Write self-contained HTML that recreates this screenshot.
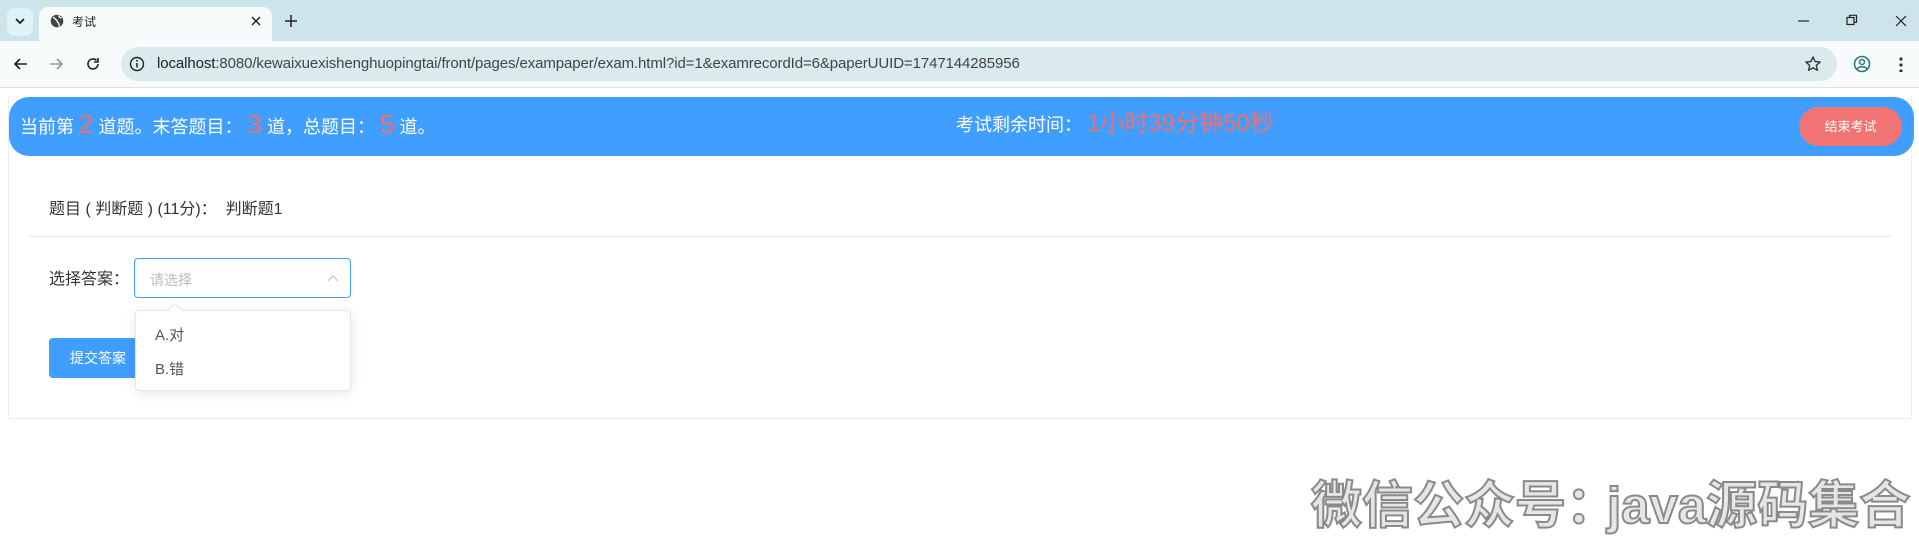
<!DOCTYPE html>
<html><head><meta charset="utf-8"><style>
*{margin:0;padding:0;box-sizing:border-box}
body{width:1919px;height:531px;overflow:hidden;background:#fff;font-family:"Liberation Sans","Noto Sans CJK SC",sans-serif;position:relative}
.abs{position:absolute}
</style></head><body>
<!-- tab strip -->
<div class="abs" style="left:0;top:0;width:1919px;height:41px;background:#cde5ea"></div>
<div class="abs" style="left:7px;top:8px;width:26px;height:28px;border-radius:8px;background:#dff4f8"></div>
<svg class="abs" style="left:13px;top:15px" width="14" height="12"><path d="M3 4l4 4 4-4" stroke="#222" stroke-width="1.8" fill="none"/></svg>
<div class="abs" style="left:39px;top:7px;width:233px;height:36px;background:#f7fbfc;border-radius:9px 9px 0 0"></div>
<svg class="abs" style="left:50px;top:14px" width="14" height="14" viewBox="0 0 14 14"><circle cx="7" cy="7" r="6.3" fill="#444"/><path d="M3 3.5c2 0 2 2 3.5 2.5s0 2 1.5 2.5 1 3 1 4M9 1.5c-.5 1.5 1 2 2.5 2.5" stroke="#fff" stroke-width="1.3" fill="none"/></svg>
<div class="abs" style="left:72px;top:13px;font-size:12px;color:#222">考试</div>
<svg class="abs" style="left:250px;top:15px" width="12" height="12"><path d="M2 2l8 8M10 2l-8 8" stroke="#222" stroke-width="1.5"/></svg>
<svg class="abs" style="left:284px;top:14px" width="14" height="14"><path d="M7 1v12M1 7h12" stroke="#222" stroke-width="1.5"/></svg>
<svg class="abs" style="left:1798px;top:15px" width="12" height="12"><path d="M0 6h11" stroke="#222" stroke-width="1.2"/></svg>
<svg class="abs" style="left:1846px;top:14px" width="12" height="12"><rect x="1" y="3.5" width="7" height="7" fill="none" stroke="#222" stroke-width="1.2"/><path d="M3.5 3.5V1.3h7v7H8" fill="none" stroke="#222" stroke-width="1.2"/></svg>
<svg class="abs" style="left:1895px;top:15px" width="12" height="12"><path d="M1 1l10 10M11 1L1 11" stroke="#222" stroke-width="1.2"/></svg>
<!-- toolbar -->
<div class="abs" style="left:0;top:41px;width:1919px;height:47px;background:#f7fbfc;border-bottom:1px solid #dde3e6"></div>
<svg class="abs" style="left:13px;top:56px" width="16" height="16"><path d="M14 8H2M7 3L2 8l5 5" stroke="#222" stroke-width="1.6" fill="none"/></svg>
<svg class="abs" style="left:48px;top:56px" width="16" height="16"><path d="M2 8h12M9 3l5 5-5 5" stroke="#999" stroke-width="1.6" fill="none"/></svg>
<svg class="abs" style="left:85px;top:56px" width="16" height="16"><path d="M13 8a5 5 0 1 1-1.5-3.6" stroke="#222" stroke-width="1.6" fill="none"/><path d="M13 2v4h-4" stroke="#222" stroke-width="1.6" fill="none"/></svg>
<div class="abs" style="left:121px;top:47px;width:1716px;height:34px;border-radius:17px;background:#dbeaed"></div>
<svg class="abs" style="left:128px;top:55px" width="18" height="18"><circle cx="9" cy="9" r="6.5" fill="none" stroke="#222" stroke-width="1.4"/><path d="M9 8v4.5" stroke="#222" stroke-width="1.5"/><circle cx="9" cy="5.7" r=".9" fill="#222"/></svg>
<div class="abs" style="left:157px;top:55px;font-size:15px;color:#222;letter-spacing:-0.1px">localhost<span style="color:#444">:8080/kewaixuexishenghuopingtai/front/pages/exampaper/exam.html?id=1&amp;examrecordId=6&amp;paperUUID=1747144285956</span></div>
<svg class="abs" style="left:1804px;top:55px" width="18" height="18" viewBox="0 0 18 18"><path d="M9 2l2.1 4.6 5 .5-3.8 3.3 1.1 4.9L9 12.8 4.6 15.3l1.1-4.9L1.9 7.1l5-.5z" fill="none" stroke="#333" stroke-width="1.4" stroke-linejoin="round"/></svg>
<svg class="abs" style="left:1852px;top:54px" width="20" height="20"><circle cx="10" cy="10" r="7.5" fill="none" stroke="#2a7a78" stroke-width="1.6"/><circle cx="10" cy="8" r="2.5" fill="none" stroke="#2a7a78" stroke-width="1.5"/><path d="M5 15c2-3 8-3 10 0" fill="none" stroke="#2a7a78" stroke-width="1.5"/></svg>
<div class="abs" style="left:1899px;top:56px;width:4px;height:16px;background:radial-gradient(circle,#333 1.6px,transparent 1.8px) 0 0/4px 6px"></div>
<!-- card -->
<div class="abs" style="left:8px;top:96px;width:1904px;height:323px;border:1px solid #ebeef5;border-top:none"></div>
<div class="abs" style="left:9px;top:97px;width:1905px;height:59px;background:#409eff;border-radius:20px"></div>
<div class="abs" style="left:20px;top:109px;font-size:18px;color:#fff;line-height:30px;white-space:nowrap">当前第 <span style="color:#f56c6c;font-size:26px">2</span> 道题。末答题目：&nbsp;<span style="color:#f56c6c;font-size:26px">3</span> 道，总题目：&nbsp;<span style="color:#f56c6c;font-size:26px">5</span> 道。</div>
<div class="abs" style="left:956px;top:109px;font-size:18px;color:#fff;line-height:30px;white-space:nowrap">考试剩余时间：&nbsp;<span style="color:#f56c6c;font-size:24px">1小时39分钟50秒</span></div>
<div class="abs" style="left:1799px;top:107px;width:103px;height:39px;border-radius:20px;background:#f27474;color:#fff;font-size:13px;line-height:39px;text-align:center">结束考试</div>
<div class="abs" style="left:49px;top:195px;font-size:16px;color:#333;white-space:nowrap">题目 ( 判断题 ) (11分)：&nbsp;&nbsp;判断题1</div>
<div class="abs" style="left:28px;top:236px;width:1865px;height:1px;background:#ebeef5"></div>
<div class="abs" style="left:49px;top:265px;font-size:16px;color:#333">选择答案：</div>
<div class="abs" style="left:134px;top:258px;width:217px;height:40px;border:1px solid #409eff;border-radius:4px"></div>
<div class="abs" style="left:150px;top:270px;font-size:14px;color:#bbb">请选择</div>
<svg class="abs" style="left:327px;top:274px" width="12" height="8"><path d="M1 7l5-5 5 5" stroke="#c0c4cc" stroke-width="1.2" fill="none"/></svg>
<div class="abs" style="left:49px;top:338px;width:95px;height:40px;border-radius:4px;background:#409eff;color:#fff;font-size:14px;line-height:40px;padding-left:21px">提交答案</div>
<div class="abs" style="left:135px;top:310px;width:216px;height:81px;background:#fff;border:1px solid #e4e7ed;border-radius:4px;box-shadow:0 2px 12px rgba(0,0,0,.1)"></div>
<div class="abs" style="left:170px;top:305px;width:10px;height:10px;background:#fff;transform:rotate(45deg);border-left:1px solid #e4e7ed;border-top:1px solid #e4e7ed"></div>
<div class="abs" style="left:155px;top:324px;font-size:15px;color:#555">A.对</div>
<div class="abs" style="left:155px;top:358px;font-size:15px;color:#555">B.错</div>
<!-- watermark -->
<div class="abs" style="left:1311px;top:464px;font-size:51px;font-weight:bold;color:#e6e6e6;-webkit-text-stroke:2px #8a8a8a;white-space:nowrap;font-family:'Liberation Sans','Noto Sans CJK SC',sans-serif">微信公众号：<span style="margin-left:-10px">java</span>源码集合</div>
</body></html>
